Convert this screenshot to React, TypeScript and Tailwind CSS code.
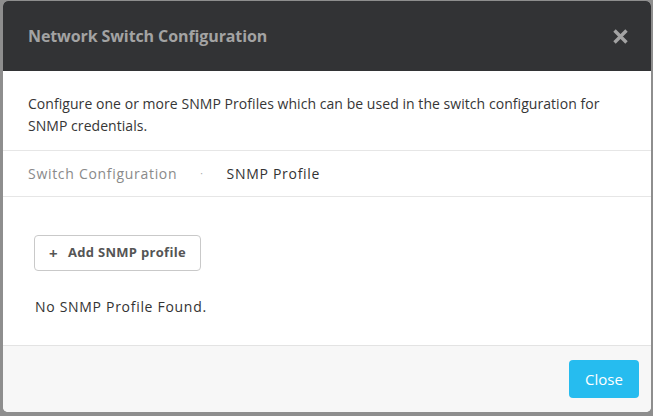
export default function App() {
  return (
    <div className="w-[653px] h-[416px] bg-[#8e8e8e] pt-px pl-[3px] overflow-hidden" style={{ fontFamily: "'Open Sans', sans-serif" }}>
      <div className="w-[648px] h-[411px] bg-white rounded-[5px] overflow-hidden flex flex-col">
        {/* header */}
        <div className="h-[70px] bg-[#323335] flex items-center justify-between pl-[25px] pr-[22px] shrink-0">
          <h1 className="text-[16px] font-bold text-[#a3a3a3] tracking-[-0.1px]">Network Switch Configuration</h1>
          <svg width="17" height="17" viewBox="0 0 17 17" className="mt-px">
            <path d="M2.5 2.5 L14.5 14.5 M14.5 2.5 L2.5 14.5" stroke="#a3a3a3" strokeWidth="3.4" strokeLinecap="butt" />
          </svg>
        </div>

        <div className="px-[25px] pt-[22px] pb-[13px] border-b border-[#e6e6e6] text-[14px] leading-[22px] text-[#363636] tracking-[0.05px]">
          Configure one or more SNMP Profiles which can be used in the switch configuration for SNMP credentials.
        </div>

        <div className="h-[46px] flex items-center px-[25px] border-b border-[#e6e6e6] text-[14px] tracking-[0.7px]">
          <span className="text-[#8a8a8a]">Switch Configuration</span>
          <span className="text-[#aaa] mx-[23px] text-[10px]">·</span>
          <span className="text-[#333]">SNMP Profile</span>
        </div>

        <div className="flex-1 px-[31px] pt-[38px]">
          <button className="h-[36px] w-[167px] border border-[#c9c9c9] rounded-[4px] flex items-center justify-center gap-[10px] text-[13px] font-bold text-[#555] bg-white tracking-[0.3px]">
            <span className="text-[15px] leading-none">+</span>
            <span>Add SNMP profile</span>
          </button>
          <p className="mt-[25px] ml-px text-[14px] text-[#333] tracking-[0.7px]">No SNMP Profile Found.</p>
        </div>

        <div className="h-[67px] bg-[#f7f7f7] border-t border-[#e3e3e3] flex items-center justify-end pr-[12px] shrink-0">
          <button className="h-[38px] w-[70px] rounded-[4px] bg-[#26bcef] text-white text-[15px]">
            Close
          </button>
        </div>
      </div>
    </div>
  );
}
